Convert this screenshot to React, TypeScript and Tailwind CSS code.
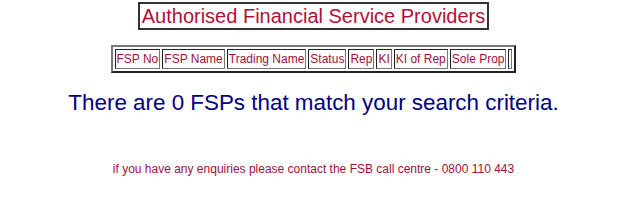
const columns = ['FSP No', 'FSP Name', 'Trading Name', 'Status', 'Rep', 'KI', 'KI of Rep', 'Sole Prop', ''];

export default function App() {
  return (
    <div className="flex flex-col items-center bg-white pl-[5px] font-['Liberation_Sans',Arial,sans-serif]">
      {/* Heading */}
      <div className="mt-[2px] border-2 border-[#333] px-[2px] text-[20px] leading-[24px] text-[#b01038]">
        Authorised Financial Service Providers
      </div>

      {/* Results table header */}
      <table className="mt-[15px] border-separate border-spacing-[2px] border-2 [border-style:outset] border-[#777] text-[12px] leading-[14px] text-[#a0103c]">
        <tbody>
          <tr>
            {columns.map((c, i) => (
              <td
                key={i}
                className="border border-[#777] [border-style:inset] px-[1px] py-[2px] whitespace-nowrap"
              >
                {c}
              </td>
            ))}
          </tr>
        </tbody>
      </table>

      {/* Message */}
      <p className="mt-[17px] text-[22.4px] leading-[26px] text-[#000080]">
        There are 0 FSPs that match your search criteria.
      </p>

      <p className="mt-[46px] text-[12px] leading-[14px] text-[#a0103c]">
        if you have any enquiries please contact the FSB call centre - 0800 110 443
      </p>
    </div>
  );
}
